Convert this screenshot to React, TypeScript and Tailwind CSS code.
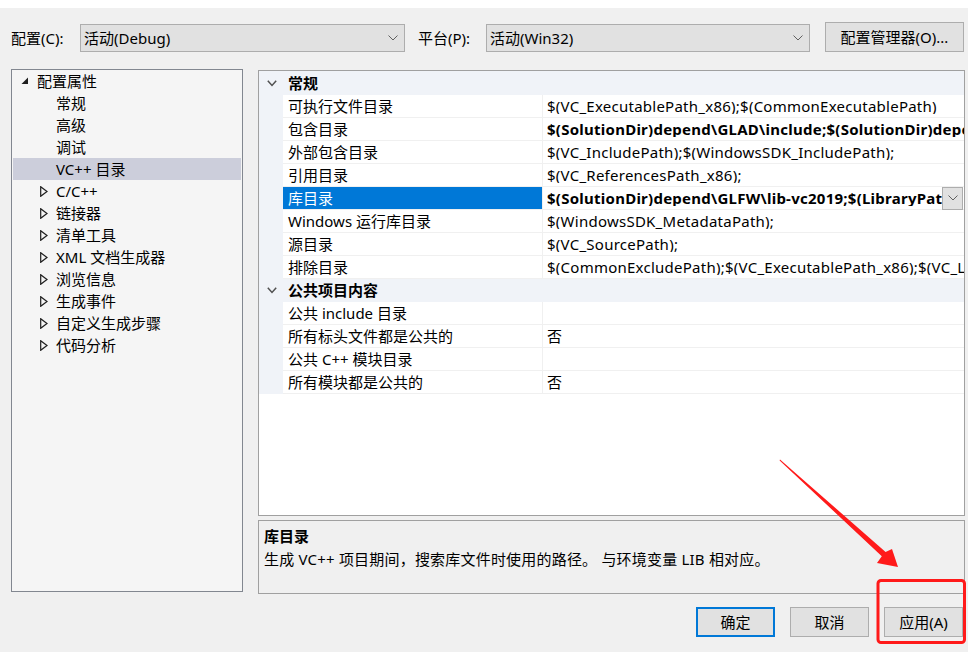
import React from 'react';

type Prop = { name: string; value: string; bold?: boolean; selected?: boolean };

const general: Prop[] = [
  { name: '可执行文件目录', value: '$(VC_ExecutablePath_x86);$(CommonExecutablePath)' },
  { name: '包含目录', value: '$(SolutionDir)depend\\GLAD\\include;$(SolutionDir)depend\\GLFW\\include;$(IncludePath)', bold: true },
  { name: '外部包含目录', value: '$(VC_IncludePath);$(WindowsSDK_IncludePath);' },
  { name: '引用目录', value: '$(VC_ReferencesPath_x86);' },
  { name: '库目录', value: '$(SolutionDir)depend\\GLFW\\lib-vc2019;$(LibraryPath)', bold: true, selected: true },
  { name: 'Windows 运行库目录', value: '$(WindowsSDK_MetadataPath);' },
  { name: '源目录', value: '$(VC_SourcePath);' },
  { name: '排除目录', value: '$(CommonExcludePath);$(VC_ExecutablePath_x86);$(VC_LibraryPath_x86)' },
];

const publicItems: Prop[] = [
  { name: '公共 include 目录', value: '' },
  { name: '所有标头文件都是公共的', value: '否' },
  { name: '公共 C++ 模块目录', value: '' },
  { name: '所有模块都是公共的', value: '否' },
];

const treeChildren = ['C/C++', '链接器', '清单工具', 'XML 文档生成器', '浏览信息', '生成事件', '自定义生成步骤', '代码分析'];

function Chevron({ className = '' }: { className?: string }) {
  return (
    <svg width="10" height="6" viewBox="0 0 10 6" className={className}>
      <polyline points="0.5,0.5 5,5 9.5,0.5" fill="none" stroke="currentColor" strokeWidth="1" />
    </svg>
  );
}

function Combo({ text, width }: { text: string; width: string }) {
  return (
    <div className={`${width} h-[28px] flex items-center bg-[#e1e1e1] border border-[#adadad] pl-[3px] pr-[6px]`}>
      <span className="flex-1">{text}</span>
      <Chevron className="text-[#606060]" />
    </div>
  );
}

function Category({ title, h }: { title: string; h: string }) {
  return (
    <div className={`flex items-center ${h} bg-[#f0f3f8]`}>
      <div className="w-[24px] flex justify-center pl-[1px]">
        <svg width="10" height="7" viewBox="0 0 10 7" className="text-[#505050]">
          <polyline points="0.8,0.8 5,5.4 9.2,0.8" fill="none" stroke="currentColor" strokeWidth="1.5" />
        </svg>
      </div>
      <span className="pl-[5px] font-bold">{title}</span>
    </div>
  );
}

function Row({ p }: { p: Prop }) {
  return (
    <div className="flex h-[23px]">
      <div className="w-[24px] shrink-0 bg-[#f0f3f8]" />
      <div
        className={`w-[260px] shrink-0 flex items-center pl-[5px] border-r border-b border-[#f0f0f0] whitespace-nowrap ${
          p.selected ? 'bg-[#0078d7] text-white' : ''
        }`}
      >
        {p.name}
      </div>
      <div className="flex-1 min-w-0 flex items-center border-b border-[#f0f0f0]">
        <span
          className={`flex-1 min-w-0 overflow-hidden whitespace-nowrap pl-[4px] tracking-[0.25px] ${
            p.bold ? 'font-bold' : ''
          }`}
        >
          {p.value}
        </span>
        {p.selected && (
          <div className="w-[21px] h-[23px] mr-[1px] shrink-0 flex items-center justify-center bg-[#e1e1e1] border border-[#adadad]">
            <Chevron className="text-[#606060]" />
          </div>
        )}
      </div>
    </div>
  );
}

function Button({ label, primary }: { label: string; primary?: boolean }) {
  return (
    <div
      className={`w-[79px] h-[30px] flex items-center justify-center bg-[#e1e1e1] ${
        primary ? 'border-2 border-[#0078d7]' : 'border border-[#adadad]'
      }`}
    >
      {label}
    </div>
  );
}

export default function App() {
  return (
    <div className="relative w-[968px] h-[652px] overflow-hidden bg-[#f0f0f0] text-[15px] leading-none text-black font-['Noto_Sans','Noto_Sans_CJK_SC',sans-serif]">
      <div className="h-[8px] bg-white" />

      {/* configuration bar */}
      <div className="flex items-end pl-[11px] mt-[14px]">
        <div className="w-[69px] h-[28px] flex items-center">配置(C):</div>
        <Combo text="活动(Debug)" width="w-[325px]" />
        <div className="w-[81px] h-[28px] flex items-center pl-[13px]">平台(P):</div>
        <Combo text="活动(Win32)" width="w-[324px]" />
        <div className="ml-[15px] w-[139px] h-[30px] flex items-center justify-center bg-[#e1e1e1] border border-[#adadad]">
          配置管理器(O)...
        </div>
      </div>

      <div className="flex pl-[11px] mt-[17px]">
        {/* tree */}
        <div className="w-[232px] h-[523px] bg-[#f5f5f5] border border-[#828790]">
          <div className="flex items-center h-[22px] pl-[9px]">
            <svg width="8" height="8" viewBox="0 0 8 8">
              <polygon points="7,0.5 7,7 0.5,7" fill="#1e1e1e" />
            </svg>
            <span className="pl-[8px]">配置属性</span>
          </div>
          {['常规', '高级', '调试'].map((t) => (
            <div key={t} className="flex items-center h-[22px] pl-[44px]">
              {t}
            </div>
          ))}
          <div className="flex items-center h-[22px] pl-[43px] mx-[1px] bg-[#cccedb]">VC++ 目录</div>
          {treeChildren.map((t) => (
            <div key={t} className="flex items-center h-[22px] pl-[28px]">
              <svg width="8" height="11" viewBox="0 0 8 11">
                <polygon points="0.7,0.7 7,5.5 0.7,10.3" fill="none" stroke="#1e1e1e" strokeWidth="1.2" />
              </svg>
              <span className="pl-[8px]">{t}</span>
            </div>
          ))}
        </div>

        <div className="ml-[15px] w-[707px] flex flex-col">
          {/* property grid */}
          <div className="mt-[1px] h-[446px] bg-white border border-[#a0a0a0] overflow-hidden">
            <Category title="常规" h="h-[24px]" />
            {general.map((p) => (
              <Row key={p.name} p={p} />
            ))}
            <Category title="公共项目内容" h="h-[23px]" />
            {publicItems.map((p) => (
              <Row key={p.name} p={p} />
            ))}
          </div>

          {/* description */}
          <div className="mt-[4px] h-[74px] border border-[#a0a0a0] pl-[5px] pt-[6px]">
            <div className="h-[18px] flex items-center font-bold">库目录</div>
            <div className="h-[22px] mt-[3px] flex items-center tracking-[0.2px]">
              生成 VC++ 项目期间，搜索库文件时使用的路径。 与环境变量 LIB 相对应。
            </div>
          </div>
        </div>
      </div>

      <div className="flex justify-end gap-[15px] pr-[5px] mt-[13px]">
        <Button label="确定" primary />
        <Button label="取消" />
        <Button label="应用(A)" />
      </div>

      {/* red annotation */}
      <svg className="absolute inset-0 pointer-events-none" width="968" height="652" viewBox="0 0 968 652">
        <polygon
          points="780,459.4 885.6,552 892,549 898,567 877,563 881.8,556.2 779.6,460.6"
          fill="#ff1a1a"
        />
        <rect x="878" y="580.5" width="86.5" height="62" rx="3" fill="none" stroke="#ff1a1a" strokeWidth="3" />
      </svg>
    </div>
  );
}
